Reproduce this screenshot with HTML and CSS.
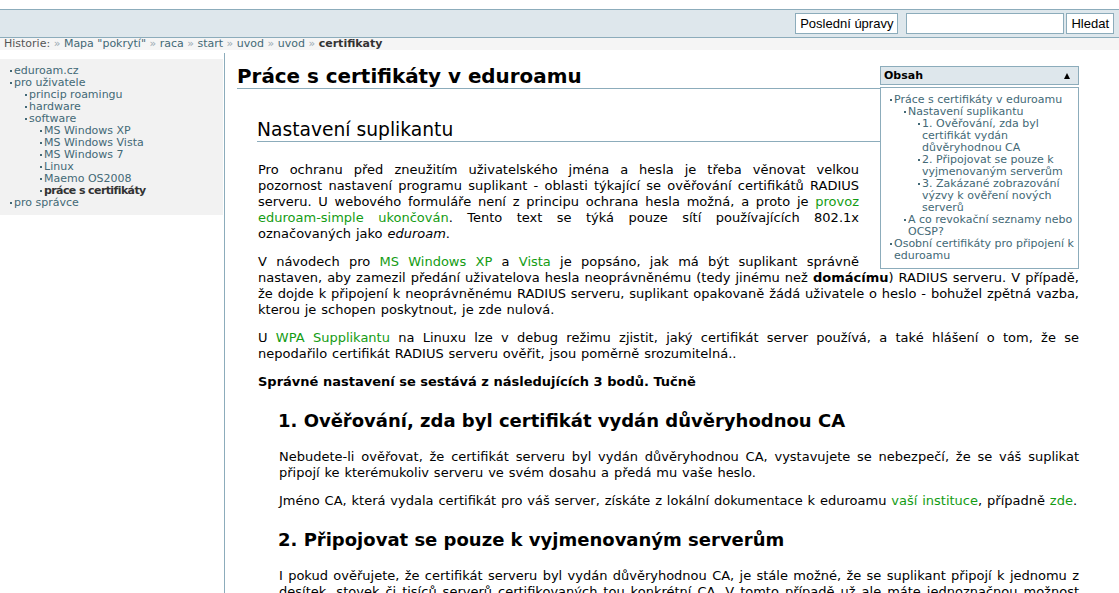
FILE: index.html
```html
<!DOCTYPE html>
<html lang="cs">
<head>
<meta charset="utf-8">
<title>Práce s certifikáty v eduroamu</title>
<link rel="stylesheet" href="styles.css">
</head>
<body>
<div class="header">
  <button class="btn" type="button">Poslední úpravy</button>
  <input class="search" type="text">
  <button class="btn btn-search" type="button">Hledat</button>
</div>
<div class="breadcrumbs">
  <span class="bc-label">Historie:</span>
  <span class="bc-sep">»</span> <a class="bc-link">Mapa "pokrytí"</a>
  <span class="bc-sep">»</span> <a class="bc-link">raca</a>
  <span class="bc-sep">»</span> <a class="bc-link">start</a>
  <span class="bc-sep">»</span> <a class="bc-link">uvod</a>
  <span class="bc-sep">»</span> <a class="bc-link">uvod</a>
  <span class="bc-sep">»</span> <span class="bc-current">certifikaty</span>
</div>
<div class="main">
  <aside class="sidebar">
    <div class="nav-box">
      <ul class="nav">
        <li><a>eduroam.cz</a></li>
        <li><a>pro uživatele</a>
          <ul>
            <li><a>princip roamingu</a></li>
            <li><a>hardware</a></li>
            <li><a>software</a>
              <ul>
                <li><a>MS Windows XP</a></li>
                <li><a>MS Windows Vista</a></li>
                <li><a>MS Windows 7</a></li>
                <li><a>Linux</a></li>
                <li><a>Maemo OS2008</a></li>
                <li class="current"><a>práce s certifikáty</a></li>
              </ul>
            </li>
          </ul>
        </li>
        <li><a>pro správce</a></li>
      </ul>
    </div>
  </aside>
  <div class="content">
    <div class="toc">
      <div class="toc-head"><span>Obsah</span><span class="toc-toggle"></span></div>
      <div class="toc-box">
        <ul class="toc-list">
          <li><a>Práce s certifikáty v eduroamu</a>
            <ul>
              <li><a>Nastavení suplikantu</a>
                <ul>
                  <li><a>1. Ověřování, zda byl certifikát vydán důvěryhodnou CA</a></li>
                  <li><a>2. Připojovat se pouze k vyjmenovaným serverům</a></li>
                  <li><a>3. Zakázané zobrazování výzvy k ověření nových serverů</a></li>
                </ul>
              </li>
              <li><a>A co revokační seznamy nebo OCSP?</a></li>
            </ul>
          </li>
          <li><a>Osobní certifikáty pro připojení k eduroamu</a></li>
        </ul>
      </div>
    </div>

    <h1 class="h1">Práce s certifikáty v eduroamu</h1>

    <h2 class="h2">Nastavení suplikantu</h2>
    <div class="level2">
      <p>Pro ochranu před zneužitím uživatelského jména a hesla je třeba věnovat velkou pozornost nastavení programu suplikant - oblasti týkající se ověřování certifikátů RADIUS serveru. U webového formuláře není z principu ochrana hesla možná, a proto je <a class="link">provoz eduroam-simple ukončován</a>. Tento text se týká pouze sítí používajících 802.1x označovaných jako <em>eduroam</em>.</p>
      <p>V návodech pro <a class="link">MS Windows XP</a> a <a class="link">Vista</a> je popsáno, jak má být suplikant správně nastaven, aby zamezil předání uživatelova hesla neoprávněnému (tedy jinému než <strong>domácímu</strong>) RADIUS serveru. V případě, že dojde k připojení k neoprávněnému RADIUS serveru, suplikant opakovaně žádá uživatele o heslo - bohužel zpětná vazba, kterou je schopen poskytnout, je zde nulová.</p>
      <p>U <a class="link">WPA Supplikantu</a> na Linuxu lze v debug režimu zjistit, jaký certifikát server používá, a také hlášení o tom, že se nepodařilo certifikát RADIUS serveru ověřit, jsou poměrně srozumitelná..</p>
      <p class="lead"><strong>Správné nastavení se sestává z následujících 3 bodů. Tučně</strong></p>
    </div>

    <h3 class="h3">1. Ověřování, zda byl certifikát vydán důvěryhodnou CA</h3>
    <div class="level3">
      <p>Nebudete-li ověřovat, že certifikát serveru byl vydán důvěryhodnou CA, vystavujete se nebezpečí, že se váš suplikat připojí ke kterémukoliv serveru ve svém dosahu a předá mu vaše heslo.</p>
      <p>Jméno CA, která vydala certifikát pro váš server, získáte z lokální dokumentace k eduroamu <a class="link">vaší instituce</a>, případně <a class="link">zde</a>.</p>
    </div>

    <h3 class="h3">2. Připojovat se pouze k vyjmenovaným serverům</h3>
    <div class="level3">
      <p>I pokud ověřujete, že certifikát serveru byl vydán důvěryhodnou CA, je stále možné, že se suplikant připojí k jednomu z desítek, stovek či tisíců serverů certifikovaných tou konkrétní CA. V tomto případě už ale máte jednoznačnou možnost ověřit, ke kterému serveru se připojujete, a proto je vhodné nastavit i jméno serveru.</p>
    </div>
  </div>
</div>
</body>
</html>
```
FILE: styles.css
```css
html, body {
  margin: 0;
  padding: 0;
  background: #fff;
}

body {
  font-family: "DejaVu Sans", Verdana, sans-serif;
  font-size: 13px;
  color: #000;
}

a {
  text-decoration: none;
}

/* ---------- header ---------- */
.header {
  margin-top: 9px;
  height: 27px;
  background: #dee7ec;
  border-top: 1px solid #8cacbb;
  border-bottom: 1px solid #8cacbb;
  display: flex;
  justify-content: flex-end;
  align-items: center;
  padding-right: 5px;
}

.btn {
  box-sizing: border-box;
  height: 21px;
  margin: 0;
  padding: 0 4px;
  font-family: "Liberation Sans", Arial, sans-serif;
  font-size: 13px;
  color: #000;
  background: #fff;
  border: 1px solid #8cacbb;
  border-radius: 0;
}

.search {
  box-sizing: border-box;
  width: 158px;
  height: 21px;
  margin: 0 2px 0 8px;
  padding: 0 3px;
  border: 1px solid #8cacbb;
  background: #fff;
  font-family: "Liberation Sans", Arial, sans-serif;
  font-size: 13px;
}

/* ---------- breadcrumbs ---------- */
.breadcrumbs {
  background: #f5f5f5;
  height: 12px;
  line-height: 12px;
  padding: 0 4px;
  font-size: 11px;
  color: #555;
  white-space: nowrap;
}

.bc-label {
  color: #555;
}

.bc-sep {
  color: #9aa9b2;
}

.bc-link {
  color: #436976;
}

.bc-current {
  font-weight: bold;
  color: #333;
}

/* ---------- main ---------- */
.main {
  display: flex;
  align-items: stretch;
}

.sidebar {
  flex: none;
  width: 224px;
  margin-top: 3px;
  border-right: 1px solid #8cacbb;
  min-height: 560px;
}

.nav-box {
  margin: 6px 1px 0 0;
  background: #f2f2f2;
  padding: 6px 0;
}

.nav,
.nav ul,
.toc-list,
.toc-list ul {
  list-style: none;
  margin: 0;
}

.nav {
  padding: 0 0 0 10px;
  font-size: 11px;
  line-height: 12px;
}

.nav ul {
  padding-left: 11px;
}

.nav li,
.toc-list li {
  padding-left: 4px;
  text-indent: -4px;
}

.nav li::before,
.toc-list li::before {
  content: "";
  display: inline-block;
  width: 2px;
  height: 2px;
  margin-right: 2px;
  background: #436976;
  vertical-align: middle;
}

.nav a {
  color: #436976;
}

.nav .current > a {
  color: #333;
  font-weight: bold;
  letter-spacing: -0.6px;
}

/* ---------- content ---------- */
.content {
  flex: 1;
  min-width: 0;
  display: flow-root;
  padding: 3px 40px 0 12px;
}

.toc {
  float: right;
  width: 199px;
  margin: 13px 0 0 21px;
  font-size: 11px;
  line-height: 12px;
}

.toc-head {
  box-sizing: border-box;
  height: 19px;
  margin-bottom: 2px;
  background: #dee7ec;
  border: 1px solid #8cacbb;
  padding: 0 8px 0 3px;
  display: flex;
  align-items: center;
  justify-content: space-between;
  font-weight: bold;
  color: #000;
}

.toc-toggle {
  width: 0;
  height: 0;
  border-left: 3.5px solid transparent;
  border-right: 3.5px solid transparent;
  border-bottom: 6px solid #000;
}

.toc-box {
  border: 1px solid #8cacbb;
  background: #fff;
  padding: 6px 0;
}

.toc-list {
  padding: 0 0 0 9px;
}

.toc-list ul {
  padding-left: 10px;
}

.toc-list a {
  color: #436976;
}

.h1 {
  margin: 12px 0 0 0;
  font-size: 19.9px;
  line-height: 23px;
  font-weight: bold;
  border-bottom: 1px solid #8cacbb;
}

.h2 {
  margin: 30px 0 20px 20px;
  font-size: 18.7px;
  line-height: 22px;
  font-weight: normal;
  border-bottom: 1px solid #8cacbb;
}

.h3 {
  margin: 20px 0 17px 41px;
  font-size: 18px;
  line-height: 22px;
  font-weight: bold;
}

.level2 {
  margin-left: 21px;
}

.level3 {
  margin-left: 42px;
}

.content p {
  margin: 0 0 12px 0;
  line-height: 16px;
  text-align: justify;
  word-spacing: 0.75px;
}

.content p.lead {
  word-spacing: 0;
}

.link {
  color: #149c14;
}
```
